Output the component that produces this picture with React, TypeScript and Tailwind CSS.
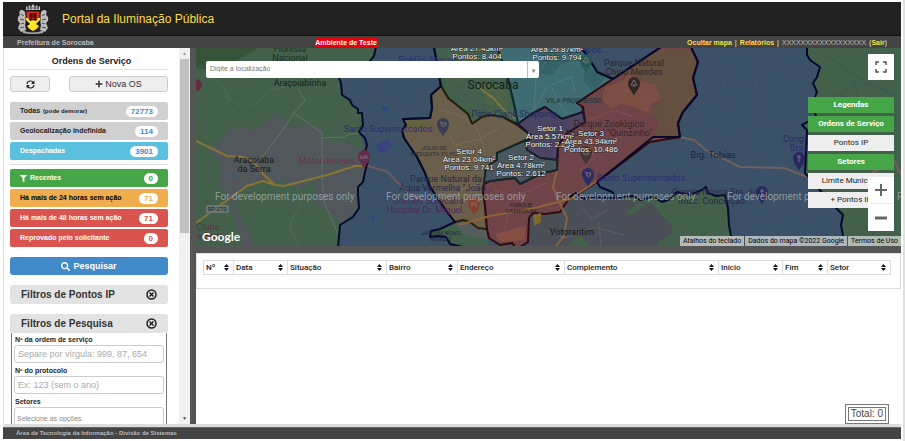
import type { ReactNode } from "react";
import { FaPlus, FaFilter, FaSearch } from "react-icons/fa";

const totals = [
  { label: "Todas", note: "(pode demorar)", value: "72773", row: "bg-[#d0d0d0] text-[#222]", badge: "text-[#428bca]" },
  { label: "Geolocalização indefinida", value: "114", row: "bg-[#d0d0d0] text-[#222]", badge: "text-[#428bca]" },
  { label: "Despachadas", value: "3901", row: "bg-[#5bc0de] text-white", badge: "text-[#428bca]" },
];

const pending = [
  { label: "Recentes", value: "0", row: "bg-[#46a546] text-white", badge: "text-[#46a546]", filter: true },
  { label: "Há mais de 24 horas sem ação", value: "71", row: "bg-[#f0ad4e] text-black", badge: "text-[#f0ad4e]" },
  { label: "Há mais de 48 horas sem ação", value: "71", row: "bg-[#d9534f] text-white", badge: "text-[#d9534f]" },
  { label: "Reprovado pelo solicitante", value: "0", row: "bg-[#d9534f] text-white", badge: "text-[#d9534f]" },
];

const columns = [
  { name: "Nº", width: "w-[30px]" },
  { name: "Data", width: "w-[54px]" },
  { name: "Situação", width: "w-[99px]" },
  { name: "Bairro", width: "w-[71px]" },
  { name: "Endereço", width: "w-[107px]" },
  { name: "Complemento", width: "w-[154px]" },
  { name: "Início", width: "w-[64px]" },
  { name: "Fim", width: "w-[45px]" },
  { name: "Setor", width: "w-[63px]" },
];

const layers = [
  { name: "Legendas", on: true },
  { name: "Ordens de Serviço", on: true },
  { name: "Pontos IP", on: false },
  { name: "Setores", on: true },
  { name: "Limite Municipal", on: false },
  { name: "+ Pontos IP", on: false },
];

const sectors = [
  { fill: "#42604c", stroke: "#0b2a1e", d: "M434 47 L437 65 441 86 448 98 463 110 468 114 472 124 482 117 490 115 503 117 517 124 519 117 515 108 508 78 503 62 497 47Z" },
  { fill: "#3f6c72", stroke: "#062c30", d: "M497 47 L508 78 515 108 518 124 530 115 545 107 562 119 583 112 582 105 577 103 613 79 597 72 587 55 580 47Z" },
  { fill: "#6a5f4b", stroke: "#251f0b", d: "M441 86 L431 95 432 108 430 118 403 119 406 125 402 130 404 138 417 157 425 173 430 187 447 212 455 222 463 220 470 222 478 228 487 229 485 205 483 192 486 167 497 160 497 153 533 137 517 125 503 117 490 115 482 117 472 124 468 114 463 110 448 98Z" },
  { fill: "#6e4449", stroke: "#300a0d", d: "M557 170 L542 173 520 184 515 178 490 181 484 184 483 192 485 205 487 229 489 238 500 245 512 243 517 249 528 242 529 218 533 213 545 214 560 212 570 197 580 193 597 182 650 142 680 137 678 123 683 112 697 95 693 78 698 62 691 47 661 47 613 79 577 103 583 107 585 122 567 133 558 145Z" },
  { fill: "#4b4463", stroke: "#1c1230", d: "M518 124 L530 115 545 107 562 119 583 112 585 122 567 133 558 145 557 160 540 158 527 150 525 142 533 137Z" },
  { fill: "#48565d", stroke: "#14252b", d: "M533 137 L497 153 497 160 486 167 484 183 490 181 515 178 520 184 542 173 557 170 557 160 540 158 527 150 525 142Z" },
];

// Municipality limits
const limits = [
  "M376 47 L374 56 366 66 350 71 339 78 341 83 342 95 350 100 352 105 358 109 358 113 362 113 363 125 359 132 365 138 367 145 365 152 368 160 365 172 363 182 358 187 358 195 359 208 353 217 340 225 338 247",
  "M807 48 L807 55 810 60 820 67 817 77 813 83 817 92 813 102 816 117 802 125 807 130 805 173 833 205 843 215 841 225 843 236 841 247",
  "M733 247 L729 225 728 208 725 195 716 196 708 193 706 187 700 191 690 195 677 192 670 199 662 202 653 197 640 200 633 196 617 198 612 192 600 187 597 182",
  "M570 197 L576 193 583 199 590 197 603 198 617 198",
  "M580 47 L587 55 597 72 613 79",
  "M613 79 L661 47",
  "M691 47 L698 62 693 78 697 95 683 112 678 123 680 137 653 137 597 182",
  "M441 86 L431 95 432 108 430 118 403 119 406 125 402 130 404 138 417 157 425 173 430 187 447 212 455 222 440 229 431 231 430 237 438 236 446 237 450 244 463 247",
  "M434 47 L437 65 441 86",
];

const places = [
  { x: 290, y: 52, lines: ["Floresta", "Nacional"], size: "text-[9px]", fill: "#1d2f26" },
  { x: 300, y: 86, lines: ["Araçoiabinha"], size: "text-[9px]", fill: "#16231c" },
  { x: 254, y: 163, lines: ["Araçoiaba", "da Serra"], size: "text-[9px]", fill: "#14191c" },
  { x: 327, y: 164, lines: ["Motel desejos"], size: "text-[9px]", fill: "#752d48" },
  { x: 388, y: 132, lines: ["Santo Supermercados"], size: "text-[9px]", fill: "#2b2d74" },
  { x: 430, y: 63, lines: ["Poldão Atacado"], size: "text-[9px]", fill: "#2b2d78" },
  { x: 208, y: 230, lines: ["Clube", "Da Serra"], size: "text-[9px]", fill: "#622f43" },
  { x: 493, y: 89, lines: ["Sorocaba"], size: "text-[12px]", fill: "#142019" },
  { x: 514, y: 117, lines: ["Pátio Cianê Shopping"], size: "text-[9px]", fill: "#263060" },
  { x: 574, y: 103, lines: ["VILA PROGRESSO"], size: "text-[7px]", fill: "#1b3034" },
  { x: 634, y: 66, lines: ["Parque Natural", "Chico Mendes"], size: "text-[9px]", fill: "#30262a" },
  { x: 609, y: 127, lines: ["Parque Zoológico", "Municipal \"Quinzinho\""], size: "text-[9px]", fill: "#35262c" },
  { x: 434, y: 150, lines: ["JÚLIO DE", "MESQUITA FILHO"], size: "text-[6px]", fill: "#302d2b" },
  { x: 446, y: 182, lines: ["Parque Natural da", "Água Vermelha \"João..."], size: "text-[9px]", fill: "#27274c" },
  { x: 428, y: 204, lines: ["Unimed Sorocaba", "Hospital Dr. Miguel..."], size: "text-[9px]", fill: "#4e2758" },
  { x: 441, y: 235, lines: ["JARDIM NOVO", "MUNDO"], size: "text-[6px]", fill: "#20243e" },
  { x: 521, y: 207, lines: ["PARQUE", "CAMPOLIM"], size: "text-[6px]", fill: "#2e2027" },
  { x: 572, y: 235, lines: ["Votorantim"], size: "text-[9px]", fill: "#15181d" },
  { x: 641, y: 181, lines: ["Santo Supermercados"], size: "text-[9px]", fill: "#2b2d74" },
  { x: 713, y: 158, lines: ["Brg. Tobias"], size: "text-[9px]", fill: "#181e42" },
  { x: 715, y: 195, lines: ["Capela Nossa Sra. da", "Imac. Conceição..."], size: "text-[9px]", fill: "#28284c" },
  { x: 801, y: 142, lines: ["Congreg.", "Brasil"], size: "text-[9px]", fill: "#2a2b6c" },
  { x: 588, y: 53, lines: ["Campos..."], size: "text-[9px]", fill: "#292c69" },
];

const sectorLabels = [
  { x: 477, y: 51, lines: ["Área 27.45km²", "Pontos: 8.404"] },
  { x: 557, y: 52, lines: ["Área 29.87km²", "Pontos: 9.794"] },
  { x: 550, y: 131, lines: ["Setor 1", "Área 5.57km²", "Pontos: 2.253"] },
  { x: 591, y: 136, lines: ["Setor 3", "Área 43.94km²", "Pontos: 10.486"] },
  { x: 469, y: 154, lines: ["Setor 4", "Área 23.04km²", "Pontos: 9.741"] },
  { x: 521, y: 160, lines: ["Setor 2", "Área 4.78km²", "Pontos: 2.612"] },
];

const pins = [
  { x: 443, y: 125, fill: "#3c3c52", glyph: "M-3 -3 H-2 L-1 1 H2 L3 -2 H-1" },
  { x: 588, y: 175, fill: "#2c2b62", glyph: "M-3 -3 H-2 L-1 1 H2 L3 -2 H-1" },
  { x: 634, y: 84, fill: "#342622", glyph: "M0 -4 L-3 1 H3Z M0 1 V3" },
  { x: 586, y: 153, fill: "#433331", glyph: "M0 -4 L-3 1 H3Z M0 1 V3" },
  { x: 364, y: 157, fill: "#642b4a", glyph: "M-3 -2 V2 M-3 1 H3 V-1 H-1" },
  { x: 474, y: 204, fill: "#873f2c", glyph: "M-2 -3 V3 M2 -3 V3 M-2 0 H2" },
  { x: 762, y: 193, fill: "#292a60", glyph: "M0 -4 V3 M-2 -2 H2" },
  { x: 799, y: 159, fill: "#292a60", glyph: "M0 -4 V3 M-2 -2 H2" },
  { x: 586, y: 61, fill: "#285955", glyph: "M0 -4 L-3 1 H3Z M0 1 V3" },
];

function MapCanvas() {
  return (
    <svg className="block h-full w-full" viewBox="196 48 705 198" preserveAspectRatio="xMinYMin slice" role="img" aria-label="Mapa dos setores">
      <rect x="196" y="48" width="1400" height="600" fill="#3b5168" />
      {/* west */}
      <path fill="#42604a" d="M196 47 H376 L374 56 366 66 339 78 342 95 355 108 362 113 363 125 359 132 367 152 368 160 363 182 358 195 359 208 340 225 338 247 H196Z" />
      <path fill="#345339" d="M196 48 H258 L238 60 219 64 210 70 196 68Z" />
      <path fill="#50585b" d="M219 141 L232 126 256 130 275 114 286 118 289 127 304 123 321 128 322 139 348 143 365 150 368 160 363 182 358 195 359 208 342 224 328 213 314 202 316 181 300 189 280 181 257 182 241 190 234 203 257 247 243 247 231 207 226 191 216 182 222 174 217 157 207 151Z" />
      <g fill="none" stroke="#627367" strokeWidth="1">
        <path d="M253 167 Q278 139 294 113 L322 133 322 175 324 202 338 234 M294 113 L305 100 298 89 M322 138 L344 137 350 134 365 133" />
        <path d="M300 247 L290 229 292 219 301 205 297 187 M276 48 V60 M210 77 L224 86 228 98 240 106 M249 106 L259 101 268 91 285 87" strokeWidth="0.5" />
      </g>
      <g fill="#355d82">
        <circle cx="234" cy="176" r="2" /><circle cx="254" cy="151" r="1" /><circle cx="227" cy="141" r="1" />
        <circle cx="309" cy="171" r="1" /><circle cx="274" cy="137" r="1" /><circle cx="322" cy="181" r="1" />
        <circle cx="349" cy="151" r="1" /><circle cx="270" cy="152" r="1" />
      </g>
      <path d="M196 141 L227 156 243 157 253 161 263 174 275 185 284 186 327 175 355 166 368 166" fill="none" stroke="#8a7434" strokeWidth="2" />
      <path d="M196 223 L219 206 247 186 263 181 275 185" fill="none" stroke="#8a7434" strokeWidth="2" />
      {/* east */}
      <path fill="#42604a" d="M807 47 L807 55 810 60 820 67 817 77 813 83 817 92 813 102 816 117 802 125 807 130 805 173 833 205 843 215 841 247 H1600 V47Z" />
      <path fill="#42604a" d="M733 247 L728 208 725 195 708 193 706 187 690 195 677 192 662 202 653 197 617 198 660 247Z" />
      <path fill="#4a4e57" d="M529 247 V218 L533 213 560 212 570 197 580 193 590 198 617 198 640 202 652 203 662 216 671 224 672 235 660 240 653 247Z" />
      <path fill="#42604a" d="M455 222 L470 222 487 229 489 247 H463 L450 244 446 237 431 237 431 231Z M624 215 L637 204 647 204 632 214Z M566 247 L580 235 592 247Z" />
      <path fill="#555d5f" d="M455 222 L470 222 487 229 487 240 463 234Z" />
      <g fill="none" stroke="#4b5376" strokeWidth="1">
        <path d="M376 48 L380 63 378 82 390 98 400 110 402 118 M368 136 L393 142 404 138 M690 70 L710 56 735 50 M700 86 L722 74 741 85 760 70 787 66 805 82 M722 74 L729 106 745 127 752 148 M760 70 L752 98 765 120 790 130 M700 106 L719 117 733 137 M744 130 L729 161 M687 160 L720 180 735 194 M757 168 L750 185 M740 49 L771 65 M781 87 L794 105 806 110" strokeWidth="0.6" />
        <path d="M820 50 L840 65 855 75 866 83 895 95 M824 101 L850 88 M853 80 L861 105" stroke="#36505a" strokeWidth="0.7" />
        <path d="M751 225 L780 247 M790 182 L800 211 824 222 M735 230 L757 218 780 220" strokeWidth="0.6" />
      </g>
      <g fill="#284791">
        <ellipse cx="385" cy="109" rx="3" ry="2" /><ellipse cx="373" cy="217" rx="1" ry="4" /><circle cx="418" cy="81" r="1" />
        <path d="M376 145 L388 139 392 145 385 153 378 151Z" fill="#3a4280" />
      </g>
      {sectors.map((s) => (
        <path key={s.d} d={s.d} fill={s.fill} stroke={s.stroke} strokeWidth="2" strokeLinejoin="round" />
      ))}
      {/* relief inside the sectors */}
      <path fill="#655040" d="M661 49 L690 49 696 62 691 78 695 95 681 112 676 123 677 135 656 135 658 118 650 112 662 100 655 84 640 79 625 72Z" />
      <path fill="#7d4e44" d="M605 87 L622 82 628 74 642 82 655 84 662 99 651 104 650 114 635 107 620 104 611 109 602 100Z" />
      <path fill="#66633f" d="M404 121 L430 120 427 125 411 129Z" />
      <path fill="#356269" d="M539 53 L554 50 571 61 560 65 552 75 540 74Z M586 65 L605 77 595 90 583 82Z" />
      <path fill="#4b6448" d="M450 50 L472 51 477 76 457 83 444 72Z M479 82 L505 85 510 105 487 105Z" />
      <path fill="#874f43" d="M495 234 L525 226 525 239 514 241 500 242Z" />
      <path d="M459 225 L490 216 535 208 570 199 597 181" fill="none" stroke="#906336" strokeWidth="2" />
      <path d="M557 171 L553 187 559 202 567 218 564 236 555 247" fill="none" stroke="#86633d" strokeWidth="2" />
      <path d="M477 86 L493 98 507 113 516 119" fill="none" stroke="#7d7440" strokeWidth="2" />
      <path d="M368 166 L388 172 397 182 410 194 425 201" fill="none" stroke="#6e5862" strokeWidth="2" />
      <path d="M680 137 L694 140 706 150 740 167 784 168 805 176 840 186 866 176 882 168 894 160 901 175" fill="none" stroke="#745f5d" strokeWidth="2" />
      <path d="M533 215 L541 213 541 222 534 226Z" fill="#80692f" />
      <g fill="none" strokeWidth="0.6">
        <path d="M520 120 L534 110 542 96 547 87 571 77 M534 110 L536 77 546 62 M552 88 L560 104 566 115 M571 77 L575 92" stroke="#578489" />
        <path d="M438 110 L460 115 478 130 485 151 M455 145 L480 139 500 127 M460 190 L475 185 M449 135 L460 152" stroke="#837256" />
        <path d="M495 190 L514 196 532 190 548 182 M505 230 L508 210 517 200 M575 120 L588 137 594 158 579 172 M601 150 L617 141 632 126 M620 90 L640 91 654 108 M590 120 L614 110 633 117" stroke="#88595a" />
        <path d="M545 230 L565 238 594 227 624 235 M580 205 L592 219 607 210 M599 222 L601 247" stroke="#666a72" />
      </g>
      {limits.map((d) => (
        <path key={d} d={d} fill="none" stroke="#06082c" strokeWidth="2" strokeLinejoin="round" />
      ))}
      {pins.map((p) => (
        <g key={`${p.x}-${p.y}`} transform={`translate(${p.x} ${p.y})`}>
          <path d="M0 12 C-1 8 -6 5 -6 -1 A6 6 0 0 1 6 -1 C6 5 1 8 0 12Z" fill={p.fill} />
          <path d={p.glyph} fill="none" stroke="#77717a" strokeWidth="1" />
        </g>
      ))}
      <path d="M196 79 A6 6 0 0 1 196 91Z" fill="#642b3c" />
      <g className="font-['Roboto',sans-serif]" textAnchor="middle">
        {places.map((p) => (
          <text key={`${p.x}-${p.y}`} className={p.size} fill={p.fill}>
            {p.lines.map((line, i) => (
              <tspan key={line} x={p.x} y={p.y + i * (p.size === "text-[6px]" ? 6 : 9)}>{line}</tspan>
            ))}
          </text>
        ))}
        <rect x="206" y="205" width="23" height="8" rx="1" fill="#6c746f" />
        <text x="217" y="211" className="text-[6px]" fill="#16201a">SP-270</text>
      </g>
      <g className="font-['Roboto',sans-serif] text-[10px]" fill="#a5adb3" fillOpacity="0.8">
        <text x="215" y="200">For development purposes only</text>
        <text x="386" y="200">For development purposes only</text>
        <text x="556" y="200">For development purposes only</text>
        <text x="727" y="200">For development purposes only</text>
        <text x="897" y="200">For development purposes only</text>
      </g>
      <g className="font-['Liberation_Sans',sans-serif] text-[8px]" textAnchor="middle" fill="#fff" stroke="#222" strokeWidth="1" paintOrder="stroke" strokeLinejoin="round">
        {sectorLabels.map((s) => (
          <text key={`${s.x}-${s.y}`}>
            {s.lines.map((line, i) => (
              <tspan key={line} x={s.x} y={s.y + i * 8}>{line}</tspan>
            ))}
          </text>
        ))}
      </g>
    </svg>
  );
}

function CrestIcon() {
  return (
    <svg className="h-[30px] w-8" viewBox="0 0 32 30" aria-hidden="true">
      <path d="M9 6 V2 L11 4 12 1 14 3 16 0 18 3 20 1 21 4 23 2 V6Z" fill="#c9c9c9" />
      <path d="M10 4 H22 M11 2 V6 M14 2 V6 M18 2 V6 M21 2 V6" stroke="#555" strokeWidth="1" />
      <path d="M8 8 C4 4 1 7 3 11 C0 13 0 17 3 19 L1 24 4 28 9 26 8 21 10 15Z M24 8 C28 4 31 7 29 11 C32 13 32 17 29 19 L31 24 28 28 23 26 24 21 22 15Z" fill="#bdbdbd" />
      <path d="M4 10 L7 12 M3 15 L7 16 M4 20 L7 19 M3 24 L7 23 M28 10 L25 12 M29 15 L25 16 M28 20 L25 19 M29 24 L25 23" stroke="#4a4a4a" strokeWidth="1" />
      <path d="M9 7 H23 V17 C23 22 20 25 16 27 C12 25 9 22 9 17Z" fill="#e02b1e" stroke="#111" strokeWidth="1" />
      <path d="M12 9 H20 V14 H12Z" fill="#7d1711" />
      <path d="M14 9 V15 M18 9 V15" stroke="#111" strokeWidth="1" />
      <path d="M9 15 H23 V18 C23 22 20 25 16 27 C12 25 9 22 9 18Z" fill="#111" />
      <path d="M9 14 H11 L13 17 16 16 19 17 21 14 H23 V16 L19 20 22 22 C20 25 18 26 16 27 C14 26 12 25 10 22 L13 20 9 16Z" fill="#ffe524" />
      <path d="M5 26 Q16 31 27 26 L26 29 Q16 31 6 29Z" fill="#a8a8a8" />
    </svg>
  );
}

function RefreshIcon() {
  return (
    <svg className="h-[9px] w-[9px]" viewBox="0 0 16 16" fill="none" stroke="#222" strokeWidth="2" aria-hidden="true">
      <path d="M2 7 C2 1 11 0 13 5 M14 9 C14 15 5 16 3 11" />
      <path d="M15 1 V7 H9Z M1 15 V9 H7Z" fill="#222" stroke="none" />
    </svg>
  );
}

function CloseCircle() {
  return (
    <svg className="h-[11px] w-[11px]" viewBox="0 0 22 22" fill="none" stroke="#222" aria-hidden="true">
      <circle cx="11" cy="11" r="9" strokeWidth="3" />
      <path d="M7 7 L15 15 M15 7 L7 15" strokeWidth="3" />
    </svg>
  );
}

function SortIcon() {
  return (
    <svg className="h-[7px] w-[5px]" viewBox="0 0 5 7" fill="#111" aria-hidden="true">
      <path d="M0 3 L2.5 0 5 3Z M0 4 H5 L2.5 7Z" />
    </svg>
  );
}

type Item = { label: string; note?: string; value: string; row: string; badge: string; filter?: boolean };

function StatusButton({ item }: { item: Item }) {
  return (
    <button type="button" className={`flex h-[18px] w-full items-center justify-between rounded-[2px] px-[10px] text-[7px] font-bold ${item.row}`}>
      <span className="flex items-center gap-[3px]">
        {item.filter && <FaFilter className="h-[7px] w-[7px]" />}
        {item.label}
        {item.note && <span className="text-[6px]">{item.note}</span>}
      </span>
      <span className={`rounded-full bg-white px-[5px] text-[8px] leading-[11px] ${item.badge}`}>{item.value}</span>
    </button>
  );
}

function FilterTitle({ children }: { children: ReactNode }) {
  return (
    <button type="button" className="flex h-[19px] w-full items-center justify-between rounded-[3px] bg-[#e3e3e3] px-[11px] text-[10px] font-bold text-[#333]">
      {children}
      <CloseCircle />
    </button>
  );
}

function Sidebar() {
  return (
    <aside className="flex w-[187px] shrink-0 border-l border-[#ddd] bg-white">
      <div className="min-w-0 flex-1 overflow-hidden pr-[11px] pl-[6px]">
        <h2 className="mt-[6px] ml-[-3px] border-b border-[#e5e5e5] pb-[1px] pl-2 text-center text-[9px] leading-[14px] font-bold text-[#222]">Ordens de Serviço</h2>
        <div className="mt-[6px] flex gap-[19px]">
          <button type="button" aria-label="Atualizar" className="flex h-4 w-10 items-center justify-center rounded-[3px] border border-[#ccc] bg-[#eee]">
            <RefreshIcon />
          </button>
          <button type="button" className="flex h-4 flex-1 items-center justify-center gap-[2px] rounded-[3px] border border-[#ccc] bg-[#eee] text-[9px] leading-3 text-[#333]">
            <FaPlus className="h-2 w-2" />
            Nova OS
          </button>
        </div>
        <div className="mt-[10px] flex flex-col gap-[2px] border-b border-[#ddd] pb-1">
          {totals.map((item) => <StatusButton key={item.label} item={item} />)}
        </div>
        <div className="mt-1 flex flex-col gap-[2px]">
          {pending.map((item) => <StatusButton key={item.label} item={item} />)}
        </div>
        <button type="button" className="mt-[10px] flex h-[18px] w-full items-center justify-center gap-[3px] rounded-[3px] bg-[#428bca] text-[9px] leading-3 font-bold text-white">
          <FaSearch className="h-[9px] w-[9px]" />
          Pesquisar
        </button>
        <div className="mt-[10px]">
          <FilterTitle>Filtros de Pontos IP</FilterTitle>
        </div>
        <div className="mt-[10px]">
          <FilterTitle>Filtros de Pesquisa</FilterTitle>
        </div>
        <form className="mx-px border-x border-[#777] px-[2px] pt-[2px] text-[7px] font-bold text-[#222]">
          <label htmlFor="ordem" className="block px-px leading-[10px]">Nº da ordem de serviço</label>
          <input id="ordem" placeholder="Separe por vírgula: 999, 87, 654" className="mb-[3px] block h-[18px] w-full rounded-[3px] border border-[#ccc] px-[3px] text-[9px] font-normal placeholder:text-[#aaa]" />
          <label htmlFor="protocolo" className="block px-px leading-[10px]">Nº do protocolo</label>
          <input id="protocolo" placeholder="Ex: 123 (sem o ano)" className="mb-[3px] block h-[18px] w-full rounded-[3px] border border-[#ccc] px-[3px] text-[9px] font-normal placeholder:text-[#aaa]" />
          <label htmlFor="setores" className="block px-px leading-[10px]">Setores</label>
          <input id="setores" placeholder="Selecione as opções" className="block h-[22px] w-full rounded-[3px] border border-[#ccc] px-[2px] text-[7px] font-normal placeholder:text-[#888]" />
        </form>
      </div>
      <div className="flex w-[11px] flex-col items-center bg-[#f1f1f1] text-[5px] leading-[11px]" aria-hidden="true">
        <span className="text-[#999]">▲</span>
        <span className="h-[174px] w-[9px] bg-[#c1c1c1]" />
        <span className="mt-auto text-[#444]">▼</span>
      </div>
    </aside>
  );
}

function MapPanel() {
  return (
    <section className="relative h-[198px] shrink-0 overflow-hidden bg-[#3b5168]">
      <MapCanvas />
      <div className="absolute top-[13px] left-[10px] flex h-[17px] w-[333px] rounded-[2px] bg-white">
        <input aria-label="Digite a localização" placeholder="Digite a localização" className="min-w-0 flex-1 px-1 text-[7px] placeholder:text-[#777]" />
        <button type="button" aria-label="Abrir lista" className="w-3 border-l border-[#bbb] pt-[3px] text-[6px] text-[#888]">▼</button>
      </div>
      <span className="absolute bottom-[2px] left-[6px] font-['Lato',sans-serif] text-[12px] leading-[14px] font-bold text-white">Google</span>
      <div className="absolute top-[49px] right-[7px] flex w-[86px] flex-col gap-[3px] font-['Roboto',sans-serif] text-[8px]">
        {layers.map((layer) => (
          <button key={layer.name} type="button" className={layer.on ? "h-4 overflow-hidden bg-[#46a546] font-bold whitespace-nowrap text-white" : "h-4 overflow-hidden bg-[#eee] whitespace-nowrap text-[#222]"}>
            {layer.name}
          </button>
        ))}
      </div>
      <button type="button" aria-label="Tela cheia" className="absolute top-[6px] right-[7px] flex h-[26px] w-[26px] items-center justify-center bg-white">
        <svg className="h-3 w-3" viewBox="0 0 12 12" fill="none" stroke="#555" strokeWidth="1.5" aria-hidden="true">
          <path d="M1 4 V1 H4 M8 1 H11 V4 M11 8 V11 H8 M4 11 H1 V8" />
        </svg>
      </button>
      <div className="absolute right-[7px] bottom-[15px] flex w-[26px] flex-col items-center bg-white">
        <button type="button" aria-label="Aumentar zoom" className="flex h-[26px] w-full items-center justify-center">
          <svg className="h-3 w-3" viewBox="0 0 12 12" stroke="#666" strokeWidth="2" aria-hidden="true"><path d="M0 6 H12 M6 0 V12" /></svg>
        </button>
        <span className="h-px w-5 bg-[#e6e6e6]" />
        <button type="button" aria-label="Diminuir zoom" className="flex h-[27px] w-full items-center justify-center">
          <svg className="h-3 w-3" viewBox="0 0 12 12" stroke="#666" strokeWidth="3" aria-hidden="true"><path d="M0 6 H12" /></svg>
        </button>
      </div>
      <div className="absolute right-0 bottom-0 flex gap-px font-['Roboto',sans-serif] text-[7px] leading-[10px] text-black">
        <button type="button" className="bg-[#b5bcb8] px-[3px]">Atalhos do teclado</button>
        <span className="bg-[#adb7c0] px-[3px]">Dados do mapa ©2022 Google</span>
        <a href="#termos" className="bg-[#b0bcb3] px-[3px]">Termos de Uso</a>
      </div>
    </section>
  );
}

function OrdersTable() {
  return (
    <section className="mt-[7px] flex min-h-0 flex-1 flex-col bg-white">
      <div className="h-9 border border-[#ddd] pt-[6px] pr-[10px] pl-[6px]">
        <table className="w-full table-fixed border-collapse font-['Roboto',sans-serif] text-[8px] text-[#222]">
          <thead>
            <tr>
              {columns.map((col) => (
                <th key={col.name} scope="col" className={`h-[14px] border border-[#ddd] p-0 font-medium ${col.width}`}>
                  <button type="button" className="flex w-full items-center justify-between pr-[4px] pl-[2px] leading-3">
                    {col.name}
                    <SortIcon />
                  </button>
                </th>
              ))}
            </tr>
          </thead>
        </table>
      </div>
      <output className="mt-auto mr-[12px] self-end border-4 border-double border-[#777] px-[2px] text-[10px] leading-3 text-[#444]">Total: 0</output>
    </section>
  );
}

export default function App() {
  return (
    <div className="flex h-screen flex-col border-r-2 border-[#e0e0e0] bg-white pt-[2px] pr-[2px] pb-[2px] pl-[3px] font-['Liberation_Sans',Arial,sans-serif]">
      <header className="shrink-0">
        <div className="flex h-[34px] items-center gap-[13px] border-b border-[#111] bg-[#222] pl-[14px]">
          <CrestIcon />
          <h1 className="text-[12px] text-[#fd4]">Portal da Iluminação Pública</h1>
        </div>
        <div className="grid h-3 grid-cols-[1fr_auto_1fr] items-center bg-[#444] px-[14px] text-[7px] leading-[9px] font-bold text-[#bbb]">
          <span>Prefeitura de Sorocaba</span>
          <span className="mr-[212px] bg-red-600 text-white">Ambiente de Teste</span>
          <nav className="flex justify-end gap-[3px] whitespace-nowrap">
            <a href="#mapa" className="text-[#fd4]">Ocultar mapa</a>
            <span>|</span>
            <a href="#relatorios" className="text-[#fd4]">Relatórios</a>
            <span>|</span>
            <span className="font-normal">XXXXXXXXXXXXXXXXXX</span>
            <span>(<a href="#sair" className="text-[#fd4]">Sair</a>)</span>
          </nav>
        </div>
      </header>
      <div className="flex min-h-0 flex-1 border-b-[3px] border-[#ddd] bg-[#555]">
        <Sidebar />
        <main className="ml-[6px] flex min-w-0 flex-1 flex-col">
          <MapPanel />
          <OrdersTable />
        </main>
      </div>
      <footer className="h-3 shrink-0 border-t border-[#666] bg-[#444] pl-[13px] text-[6px] leading-[10px] font-bold text-[#bbb]">
        Área de Tecnologia da Informação - Divisão de Sistemas
      </footer>
    </div>
  );
}
